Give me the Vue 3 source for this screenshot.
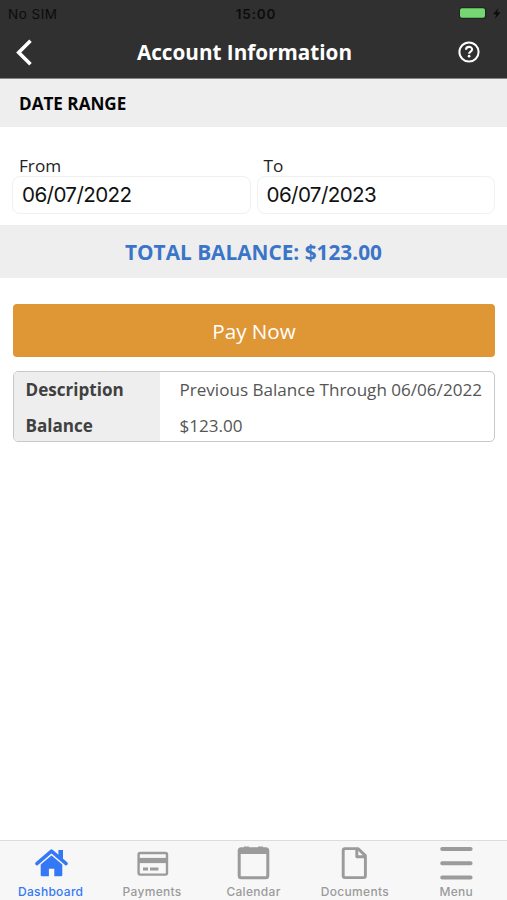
<script setup>
const fields = [
  { label: 'From', value: '06/07/2022' },
  { label: 'To', value: '06/07/2023' },
]
const rows = [
  { label: 'Description', value: 'Previous Balance Through 06/06/2022' },
  { label: 'Balance', value: '$123.00' },
]
const tabs = ['Dashboard', 'Payments', 'Calendar', 'Documents', 'Menu']
</script>

<template>
  <div class="screen">
    <header class="top">
      <div class="status">
        <span class="carrier">No SIM</span>
        <span class="time">15:00</span>
        <svg class="battery" width="44" height="14" viewBox="0 0 44 14">
          <rect x="-1" y="0" width="27.5" height="12" rx="3.5" fill="#202720" />
          <rect x="0" y="1.2" width="25" height="9.6" rx="2" fill="#76d672" />
          <path d="M38.5 1 33.1 7.3h3.2L34.9 12l5.6-6.8h-3.3z" fill="#0c0c0c" />
        </svg>
      </div>
      <div class="nav">
        <svg class="back" width="20" height="30" viewBox="0 0 20 30">
          <path d="M16.5 2.8 4.7 14.5 16.5 26.2" fill="none" stroke="#fff" stroke-width="3.6" />
        </svg>
        <h1>Account Information</h1>
        <svg class="help" width="22" height="22" viewBox="0 0 22 22">
          <circle cx="11" cy="11" r="9.6" fill="none" stroke="#fff" stroke-width="2" />
          <path d="M8 8.8C8 5 14.1 5 14.1 8.5c0 2.1-3 2-3 4.2" fill="none" stroke="#fff" stroke-width="2.1" />
          <circle cx="11.1" cy="15.2" r="1.35" fill="#fff" />
        </svg>
      </div>
    </header>

    <h2 class="section">DATE RANGE</h2>
    <div class="dates">
      <label v-for="f in fields" :key="f.label" class="field">
        <span class="caption">{{ f.label }}</span>
        <span class="value">{{ f.value }}</span>
      </label>
    </div>
    <div class="total"><span>TOTAL BALANCE: $123.00</span></div>

    <main>
      <button class="pay"><span>Pay Now</span></button>
      <dl class="details">
        <div v-for="r in rows" :key="r.label" class="row">
          <dt><span>{{ r.label }}</span></dt>
          <dd><span>{{ r.value }}</span></dd>
        </div>
      </dl>
    </main>

    <nav class="tabs">
      <a v-for="t in tabs" :key="t" class="tab" :class="{ active: t === 'Dashboard' }">
        <svg width="36" height="36" viewBox="0 0 36 36">
          <g v-if="t === 'Dashboard'" fill="currentColor">
            <path d="M7.7 18.6 18.5 9.3l10.8 9.3V30q0 1.3-1.2 1.3h-6.8v-7.6h-5.4v7.6H8.9q-1.2 0-1.2-1.3z" />
            <path d="M3.3 19.6 18.5 6.9l15.2 12.7" fill="none" stroke="#f7f7f7" stroke-width="5.4" />
            <path d="M25.4 4.9h4.6v10.5l-4.6-3.6z" />
            <path d="M3.9 18.6 18.5 6.1l14.6 12.5" fill="none" stroke="currentColor" stroke-width="3.4" stroke-linecap="round" stroke-linejoin="round" />
          </g>
          <g v-else-if="t === 'Payments'" fill="none" stroke="currentColor" stroke-width="2.4">
            <rect x="4.6" y="8" width="28.4" height="21.6" rx="1.5" />
            <path d="M4.6 15.5H33" stroke-width="5.2" />
            <path d="M9 24h5M16 24h8.4" stroke-width="2.8" />
          </g>
          <g v-else-if="t === 'Calendar'" fill="none" stroke="currentColor">
            <rect x="4.2" y="3.8" width="28.6" height="29" rx="2" stroke-width="3" />
            <path d="M4.2 6h28.6" stroke-width="6" />
            <path d="M9 2.7h5M23 2.7h5" stroke-width="2.4" />
          </g>
          <g v-else-if="t === 'Documents'" fill="none" stroke="currentColor" stroke-width="2.9" stroke-linejoin="round">
            <path d="M8 3.6h13l7.4 7v20.2q0 1.8-1.8 1.8H8q-1.8 0-1.8-1.8V5.4q0-1.8 1.8-1.8z" />
            <path d="M19.8 3.6v8.2h8.6" />
          </g>
          <path v-else d="M4.2 4H32.6M4.2 18.2H32.6M4.2 32.5H32.6" stroke="currentColor" stroke-width="4" stroke-linecap="round" />
        </svg>
        <span>{{ t }}</span>
      </a>
    </nav>
  </div>
</template>

<style>
body {
  margin: 0;
}
</style>

<style scoped>
* {
  box-sizing: border-box;
}
.screen {
  width: 507px;
  height: 900px;
  display: flex;
  flex-direction: column;
  overflow: hidden;
  background: #fff;
  font-family: 'Open Sans', 'Noto Sans', sans-serif;
}
.top {
  height: 79px;
  background: #303030;
  border-bottom: 1px solid #858585;
  color: #fff;
}
.status {
  height: 27px;
  display: grid;
  grid-template-columns: 1fr auto 1fr;
  align-items: center;
  padding: 0 3px 0 8px;
  color: #0c0c0c;
  font: 13.5px Inter, sans-serif;
}
.carrier {
  letter-spacing: 0.5px;
}
.time {
  font-weight: 600;
  letter-spacing: 0.8px;
}
.battery {
  justify-self: end;
  overflow: visible;
}
.nav {
  height: 51px;
  display: grid;
  grid-template-columns: 60px 1fr 78px;
  align-items: center;
}
.back {
  margin-left: 14px;
}
h1 {
  margin: -1px 0 0;
  font-size: 20.7px;
  line-height: 28px;
  text-align: center;
  white-space: nowrap;
}
.help {
  margin: -1px 0 0 29px;
}
.section {
  margin: 0;
  height: 48px;
  padding: 1px 0 0 19px;
  background: #eee;
  color: #050505;
  font-size: 17.1px;
  line-height: 48px;
}
.dates {
  height: 98px;
  padding: 26px 12px 0;
  display: flex;
  gap: 6px;
}
.field {
  flex: 1;
}
.caption {
  display: block;
  height: 23px;
  padding-left: 7px;
  font-size: 17.2px;
  line-height: 25px;
  color: #222;
}
.value {
  display: block;
  height: 38px;
  padding-left: 9px;
  border: 1.5px solid #f0f0f0;
  border-radius: 8px;
  font: 20.6px/35px Inter, sans-serif;
  letter-spacing: -0.6px;
  color: #111;
}
.total {
  height: 53px;
  padding-top: 1px;
  background: #eee;
  color: #3b75c9;
  text-align: center;
  font-size: 20.8px;
  font-weight: 700;
  line-height: 53px;
}
main {
  flex: 1;
  padding: 26px 12px 0 13px;
}
.pay {
  display: block;
  width: 100%;
  height: 53px;
  padding: 1px 0 0;
  border: 0;
  border-radius: 4px;
  background: #df9635;
  color: #fff;
  font: 20.6px/53px 'Open Sans', sans-serif;
}
.details {
  margin: 14px 0 0;
  height: 71px;
  border: 1.5px solid #c8c8c8;
  border-radius: 5px;
  overflow: hidden;
}
.row {
  display: grid;
  grid-template-columns: 146px 1fr;
  height: 36px;
  line-height: 36px;
  font-size: 17.08px;
  white-space: nowrap;
}
dt {
  padding-left: 11.5px;
  background: #eee;
  color: #404040;
  font-weight: 700;
}
dd {
  margin: 0;
  padding-left: 19.5px;
  color: #555;
}
.tabs {
  height: 60px;
  display: grid;
  grid-template-columns: repeat(5, 1fr);
  background: #f7f7f7;
  border-top: 1px solid #dcdcdc;
}
.tab {
  display: flex;
  flex-direction: column;
  align-items: center;
  padding-top: 4px;
  color: #9b9b9b;
  font: 500 12px/22px Inter, sans-serif;
  letter-spacing: 0.3px;
}
.tab svg {
  flex: none;
}
.active {
  color: #3478f6;
}
</style>
